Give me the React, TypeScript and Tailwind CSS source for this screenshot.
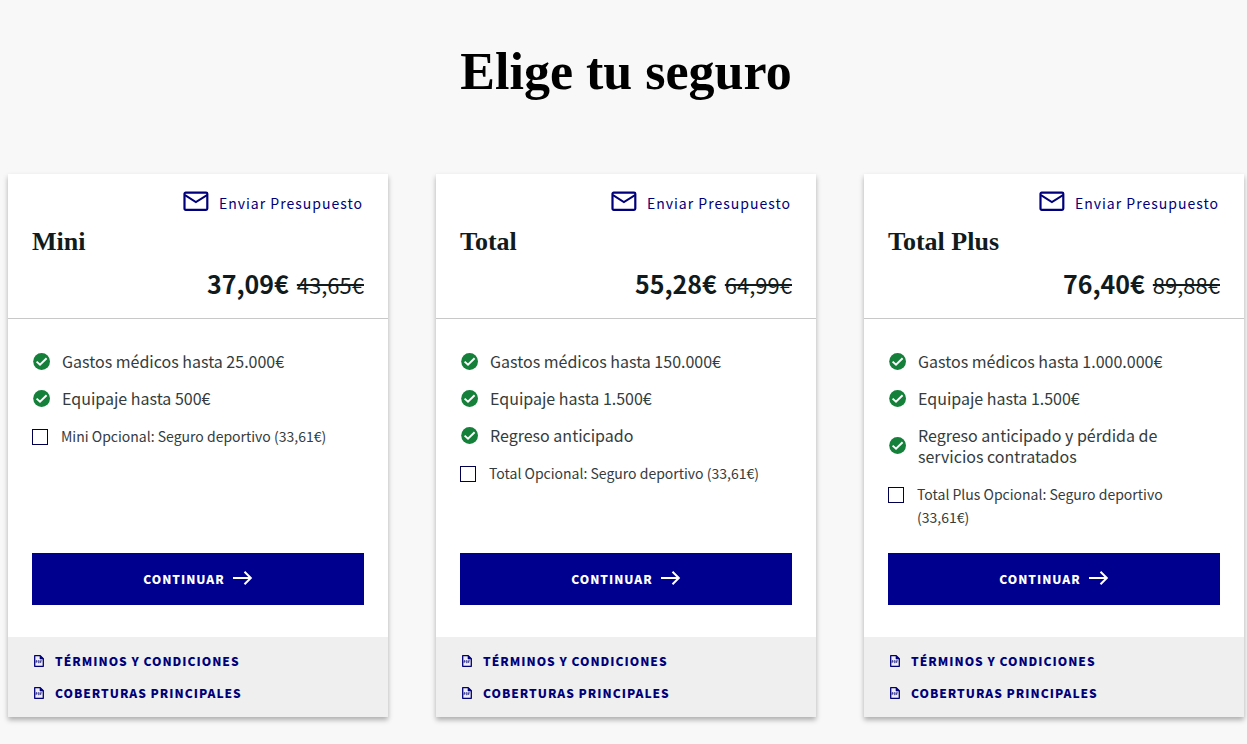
import React from "react";

type Plan = {
  id: string;
  name: string;
  price: string;
  oldPrice: string;
  features: string[];
  option: string;
};

const plans: Plan[] = [
  {
    id: "mini",
    name: "Mini",
    price: "37,09€",
    oldPrice: "43,65€",
    features: ["Gastos médicos hasta 25.000€", "Equipaje hasta 500€"],
    option: "Mini Opcional: Seguro deportivo (33,61€)",
  },
  {
    id: "total",
    name: "Total",
    price: "55,28€",
    oldPrice: "64,99€",
    features: ["Gastos médicos hasta 150.000€", "Equipaje hasta 1.500€", "Regreso anticipado"],
    option: "Total Opcional: Seguro deportivo (33,61€)",
  },
  {
    id: "total-plus",
    name: "Total Plus",
    price: "76,40€",
    oldPrice: "89,88€",
    features: [
      "Gastos médicos hasta 1.000.000€",
      "Equipaje hasta 1.500€",
      "Regreso anticipado y pérdida de servicios contratados",
    ],
    option: "Total Plus Opcional: Seguro deportivo (33,61€)",
  },
];

function MailIcon() {
  return (
    <svg className="h-5 w-[26px] shrink-0" viewBox="0 0 26 20" fill="none" stroke="currentColor" strokeWidth="2.2" aria-hidden="true">
      <rect x="1.5" y="1.6" width="22.8" height="17.2" rx="1.2" />
      <path d="M2 4.1 12.9 11.1 24 4.1" strokeWidth="1.9" />
    </svg>
  );
}

function CheckIcon() {
  return (
    <svg className="size-[18px] shrink-0" viewBox="0 0 18 18" fill="none" aria-hidden="true">
      <circle cx="8.6" cy="8.5" r="8.4" fill="#15803a" />
      <path d="M3.6 8.6 7 11.7 13.6 5.2" stroke="#fff" strokeWidth="1.9" />
    </svg>
  );
}

function ArrowIcon() {
  return (
    <svg className="h-4 w-5 shrink-0" viewBox="0 0 20 16" fill="none" stroke="currentColor" strokeWidth="2" aria-hidden="true">
      <path d="M0 7H18M11.5 .8 17.8 7 11.5 13.2" />
    </svg>
  );
}

function PdfIcon() {
  return (
    <svg className="h-3 w-[10px] shrink-0" viewBox="0 0 10 12" fill="none" stroke="currentColor" aria-hidden="true">
      <path d="M.7 .7H6.2L9.3 3.8V11.3H.7Z" strokeWidth="1.3" strokeLinejoin="round" />
      <path d="M6 .7V4H9.3Z" fill="currentColor" strokeWidth=".6" />
      <path d="M2.1 8V5.6H3V6.8H2.1M4.3 5.6V7.8H5.2V5.6ZM6.5 8V5.6H7.8M6.5 6.8H7.6" strokeWidth=".6" />
    </svg>
  );
}

function DocLink({ children }: { children: React.ReactNode }) {
  return (
    <a href="#" className="flex items-center gap-[11px] text-xs leading-4 font-black tracking-[1px] text-[#00007a] uppercase">
      <PdfIcon />
      <span>{children}</span>
    </a>
  );
}

function PlanCard({ plan }: { plan: Plan }) {
  return (
    <article className="flex flex-col bg-white shadow-[0_3px_5px_rgba(0,0,0,0.3)]">
      <header className="border-b border-[#c8c8c8] px-6 pt-3 pb-[18px]">
        <a href="#" className="flex items-start justify-end gap-[10px] pt-[5px] pr-px text-sm leading-6 tracking-[1px] text-[#00007a]">
          <MailIcon />
          <span>Enviar Presupuesto</span>
        </a>
        <h2 className="mt-[13px] font-['Liberation_Serif',serif] text-[26px] leading-7 font-bold text-[#111b1d]">{plan.name}</h2>
        <p className="mt-[11px] flex items-baseline justify-end gap-2 leading-8 text-[#111b1d]">
          <strong className="text-[25px] leading-8 font-bold">{plan.price}</strong>
          <s className="text-[22px] leading-8">{plan.oldPrice}</s>
        </p>
      </header>
      <div className="flex flex-1 flex-col px-6 pt-8 pb-8 text-[#343c3d]">
        <ul className="flex flex-col gap-4">
          {plan.features.map((feature) => (
            <li key={feature} className="flex items-center gap-[11px] pl-px text-base leading-[21px]">
              <CheckIcon />
              <span className="max-w-[270px]">{feature}</span>
            </li>
          ))}
        </ul>
        <div className="mt-4 mb-6 flex items-start gap-[13px]">
          <input
            id={plan.id}
            type="checkbox"
            className="mt-1 size-4 shrink-0 appearance-none border border-[#00004f] bg-white checked:bg-[#00008f]"
          />
          <label htmlFor={plan.id} className="max-w-[290px] text-sm leading-[23px]">
            {plan.option}
          </label>
        </div>
        <button
          type="button"
          className="mt-auto flex h-[52px] w-full items-center justify-center gap-2 bg-[#00008f] text-xs font-black tracking-[1px] text-white uppercase"
        >
          <span>Continuar</span>
          <ArrowIcon />
        </button>
      </div>
      <footer className="flex flex-col gap-4 bg-[#efefef] px-[26px] py-4">
        <DocLink>Términos y condiciones</DocLink>
        <DocLink>Coberturas principales</DocLink>
      </footer>
    </article>
  );
}

export default function App() {
  return (
    <main className="min-h-screen bg-[#f8f8f8] pt-10 pr-[3px] pb-6 pl-2 font-['Noto_Sans_CJK_JP','Noto_Sans',sans-serif]">
      <h1 className="text-center font-['Liberation_Serif',serif] text-[52px] leading-[64px] font-bold text-black">Elige tu seguro</h1>
      <section className="mt-[70px] grid grid-cols-3 gap-12">
        {plans.map((plan) => (
          <PlanCard key={plan.id} plan={plan} />
        ))}
      </section>
    </main>
  );
}
